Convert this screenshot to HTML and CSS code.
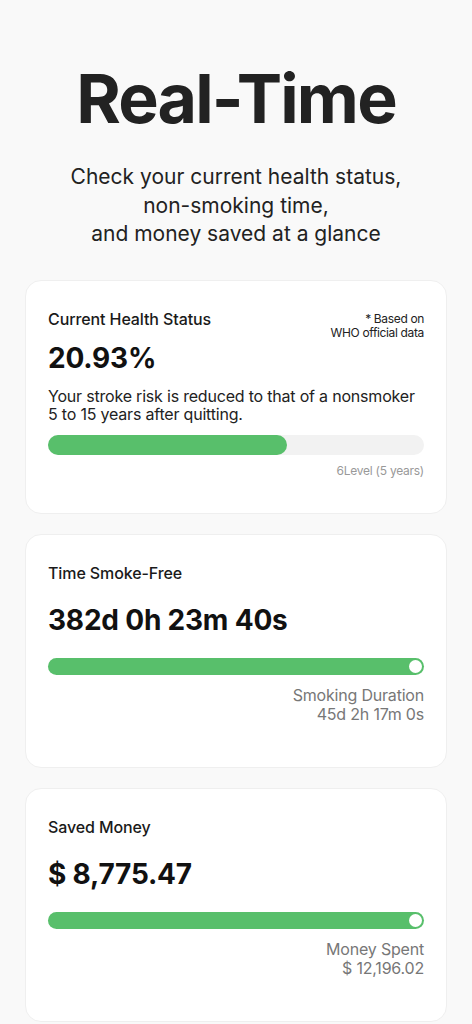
FILE: index.html
```html
<!DOCTYPE html>
<html lang="en">
<head>
  <meta charset="UTF-8">
  <title>Real-Time</title>
  <link rel="stylesheet" href="styles.css">
</head>
<body>
  <h1 class="title">Real-Time</h1>
  <p class="lead">Check your current health status,<br>non-smoking time,<br>and money saved at a glance</p>

  <div class="cards">
    <section class="card">
      <div class="card-head">
        <h2>Current Health Status</h2>
        <span class="note">* Based on<br>WHO official data</span>
      </div>
      <div class="big">20.93%</div>
      <p class="desc">Your stroke risk is reduced to that of a nonsmoker<br>5 to 15 years after quitting.</p>
      <div class="track">
        <div class="fill" style="width: 63.5%"></div>
      </div>
      <div class="level">6Level (5 years)</div>
    </section>

    <section class="card">
      <h2>Time Smoke-Free</h2>
      <div class="big spaced">382d 0h 23m 40s</div>
      <div class="slider"><span class="knob"></span></div>
      <div class="sub">Smoking Duration<br>45d 2h 17m 0s</div>
    </section>

    <section class="card">
      <h2>Saved Money</h2>
      <div class="big spaced">$ 8,775.47</div>
      <div class="slider"><span class="knob"></span></div>
      <div class="sub">Money Spent<br>$ 12,196.02</div>
    </section>
  </div>
</body>
</html>
```

FILE: styles.css
```css
body {
  margin: 0;
  background: #f9f9f9;
  color: #222;
  font-family: Inter, "Noto Sans", sans-serif;
  text-align: center;
}

.title {
  margin: 0;
  padding-top: 64px;
  font-size: 68px;
  line-height: 1;
  font-weight: 700;
  letter-spacing: -1.8px;
}

.lead {
  margin: 31px 0 0;
  font-size: 21px;
  line-height: 28.5px;
}

.cards {
  display: flex;
  flex-direction: column;
  gap: 20px;
  padding: 31px 25px 0;
  text-align: left;
}

.card {
  height: 234px;
  box-sizing: border-box;
  padding: 28px 22px 0;
  background: #fff;
  border: 1px solid #efefef;
  border-radius: 16px;
}

.card h2 {
  margin: 0;
  font-size: 16px;
  line-height: 20px;
  font-weight: 500;
  color: #1a1a1a;
  letter-spacing: -0.1px;
}

.card-head {
  display: flex;
  justify-content: space-between;
  align-items: flex-start;
}

.note {
  margin-top: 3px;
  font-size: 12px;
  line-height: 14.5px;
  letter-spacing: -0.35px;
  text-align: right;
  color: #222;
}

.big {
  font-size: 28px;
  line-height: 34px;
  font-weight: 700;
  letter-spacing: -0.2px;
  color: #111;
}

.big.spaced {
  margin-top: 20.5px;
}

.desc {
  margin: 12px 0 0;
  font-size: 16px;
  line-height: 18.5px;
  letter-spacing: -0.2px;
  white-space: nowrap;
  color: #222;
}

.track {
  margin-top: 11.5px;
  height: 20px;
  border-radius: 10px;
  background: #f2f2f2;
}

.fill {
  height: 100%;
  border-radius: 10px;
  background: #58bf6b;
}

.level {
  margin-top: 8px;
  font-size: 12px;
  line-height: 16px;
  letter-spacing: -0.25px;
  text-align: right;
  color: #999;
}

.slider {
  position: relative;
  margin-top: 20.5px;
  height: 17px;
  border-radius: 9px;
  background: #58bf6b;
}

.knob {
  position: absolute;
  right: 2px;
  top: 2px;
  width: 13px;
  height: 13px;
  border-radius: 50%;
  background: #fff;
}

.sub {
  margin-top: 11px;
  font-size: 16px;
  line-height: 19px;
  letter-spacing: -0.2px;
  text-align: right;
  color: #777;
}
```
